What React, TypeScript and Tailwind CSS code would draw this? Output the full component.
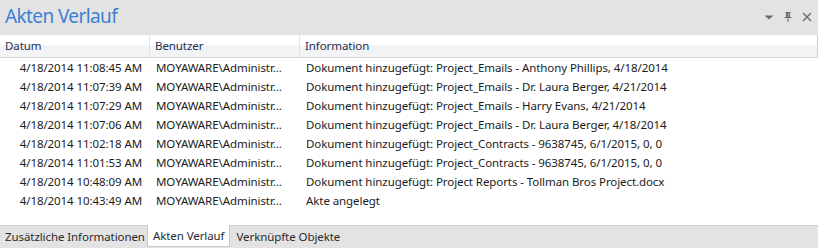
import React from "react";

const rows = [
  ["4/18/2014 11:08:45 AM", "Dokument hinzugefügt: Project_Emails - Anthony Phillips, 4/18/2014"],
  ["4/18/2014 11:07:39 AM", "Dokument hinzugefügt: Project_Emails - Dr. Laura Berger, 4/21/2014"],
  ["4/18/2014 11:07:29 AM", "Dokument hinzugefügt: Project_Emails - Harry Evans, 4/21/2014"],
  ["4/18/2014 11:07:06 AM", "Dokument hinzugefügt: Project_Emails - Dr. Laura Berger, 4/18/2014"],
  ["4/18/2014 11:02:18 AM", "Dokument hinzugefügt: Project_Contracts - 9638745, 6/1/2015, 0, 0"],
  ["4/18/2014 11:01:53 AM", "Dokument hinzugefügt: Project_Contracts - 9638745, 6/1/2015, 0, 0"],
  ["4/18/2014 10:48:09 AM", "Dokument hinzugefügt: Project Reports - Tollman Bros Project.docx"],
  ["4/18/2014 10:43:49 AM", "Akte angelegt"],
];

export default function App() {
  return (
    <div
      className="w-[818px] h-[248px] bg-[#e3e3e3] flex flex-col overflow-hidden text-[11.5px] tracking-[-0.08px] text-[#1b1b1b]"
      style={{ fontFamily: '"Noto Sans", "Open Sans", sans-serif' }}
    >
      <div className="h-[35px] flex items-center justify-between pl-[5px] pr-[5px]">
        <span className="text-[19px] tracking-[-0.6px] text-[#3c80d6] leading-none -mt-[3px]">Akten Verlauf</span>
        <div className="flex items-center gap-[7px] -mt-[2px]">
          <svg width="12" height="12" viewBox="0 0 12 12">
            <path d="M1.5 4.5h9L6 8.5z" fill="#6b6b6b" />
          </svg>
          <svg width="12" height="12" viewBox="0 0 12 12">
            <path d="M3.5 1.5h5M4.5 1.5v5M7.5 1.5v5M2.5 6.5h7M6 6.5v4.5" stroke="#6b6b6b" strokeWidth="1" fill="none" />
            <rect x="4.5" y="2" width="2" height="4.5" fill="#6b6b6b" />
          </svg>
          <svg width="12" height="12" viewBox="0 0 12 12">
            <path d="M2 2l8 8M10 2l-8 8" stroke="#6b6b6b" strokeWidth="1.4" fill="none" />
          </svg>
        </div>
      </div>
      <div className="flex-1 bg-white flex flex-col">
        <div className="h-[23px] flex border-b border-[#d5d5d5] bg-[linear-gradient(#ffffff_0%,#ffffff_45%,#f1f2f4_50%,#f3f4f6_100%)] text-[#1e2f50] border-r border-r-[#d0d0d0]">
          <div className="w-[150px] pl-[5px] flex items-center border-r border-[#e3e3e3]">Datum</div>
          <div className="w-[150px] pl-[5px] flex items-center border-r border-[#e3e3e3]">Benutzer</div>
          <div className="flex-1 pl-[5px] flex items-center">Information</div>
        </div>
        <div className="flex flex-col">
          {rows.map(([d, info], i) => (
            <div key={i} className="h-[19px] flex items-center">
              <div className="w-[142px] text-right">{d}</div>
              <div className="w-[164px] pl-[14px] whitespace-nowrap overflow-hidden">MOYAWARE\Administr...</div>
              <div className="flex-1 whitespace-nowrap">{info}</div>
            </div>
          ))}
        </div>
      </div>
      <div className="h-[23px] flex border-t border-[#cfcfcf] bg-[#e3e3e3] text-[#2b2b2b]">
        <div className="pl-[5px] pr-[2px] flex items-center">Zusätzliche Informationen</div>
        <div className="px-[5px] flex items-center bg-white border-x border-b border-[#c9c9c9] -mt-[1px] mb-[1px]">Akten Verlauf</div>
        <div className="px-[6px] flex items-center">Verknüpfte Objekte</div>
      </div>
    </div>
  );
}
